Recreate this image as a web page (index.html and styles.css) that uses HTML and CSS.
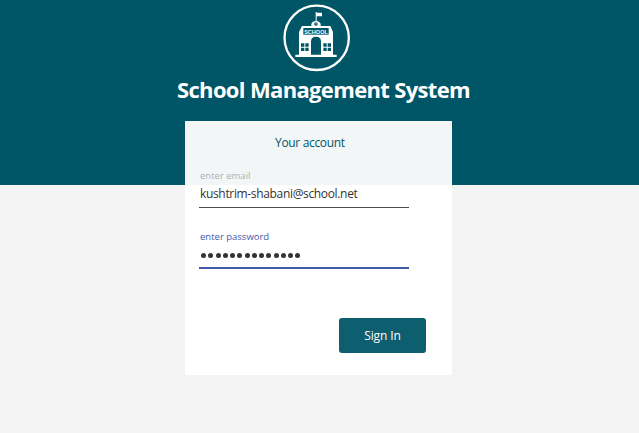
FILE: index.html
```html
<!DOCTYPE html>
<html lang="en">
<head>
<meta charset="utf-8">
<title>School Management System</title>
<link rel="stylesheet" href="styles.css">
</head>
<body>
<main class="page">
  <svg class="logo" viewBox="0 0 240 228" aria-hidden="true">
    <circle cx="122" cy="113.5" r="96.5" fill="none" stroke="#fff" stroke-width="7"/>
    <path fill="#fff" d="M119 36h3v2h16v11h-16v14h-3z"/>
    <path fill="#fff" d="M106 78v-6q3-9 14-9t14 9v6h29l8 18v68h11v7H58v-7h11V96l9-18z"/>
    <circle cx="120" cy="72" r="5.5" fill="#005667"/>
    <path d="M120 69v3h3" fill="none" stroke="#fff" stroke-width="1.5"/>
    <rect x="82" y="84" width="76" height="20" fill="#005667"/>
    <text class="sign" x="120" y="100.5" text-anchor="middle" textLength="71" lengthAdjust="spacingAndGlyphs">SCHOOL</text>
    <path fill="#005667" d="M105 164v-40q0-14 15-14t15 14v40z"/>
    <path fill="#005667" d="M75 130h10v10H75zM88 130h10v10H88zM75 143h10v10H75zM88 143h10v10H88zM142 130h10v10h-10zM155 130h10v10h-10zM142 143h10v10h-10zM155 143h10v10h-10z"/>
  </svg>
  <h1 class="title">School Management System</h1>
  <form class="card">
    <h2 class="heading">Your account</h2>
    <div class="field">
      <div class="label">enter email</div>
      <div class="value">kushtrim-shabani@school.net</div>
    </div>
    <div class="field active">
      <div class="label">enter password</div>
      <div class="dots"><i></i><i></i><i></i><i></i><i></i><i></i><i></i><i></i><i></i><i></i><i></i><i></i><i></i><i></i></div>
    </div>
    <button class="submit" type="button">Sign In</button>
  </form>
</main>
</body>
</html>
```
FILE: styles.css
```css
* { box-sizing: border-box; }
body {
  margin: 0;
  font-family: "Open Sans", "Noto Sans", sans-serif;
  background: #f3f3f3;
}
.page {
  height: 433px;
  overflow: hidden;
  background: linear-gradient(#005667 185px, #f3f3f3 185px);
}
.logo {
  display: block;
  width: 80px;
  height: 76px;
  margin-left: 276px;
}
.sign {
  fill: #fff;
  font: bold 18px "Liberation Sans", sans-serif;
}
.title {
  margin: 0 0 0 177px;
  height: 45px;
  font-size: 22px;
  font-weight: 700;
  line-height: 27px;
  letter-spacing: -0.66px;
  color: #fff;
  white-space: nowrap;
}
.card {
  width: 267px;
  height: 254px;
  margin-left: 185px;
  padding: 12px 26px 22px 14px;
  background: rgba(255, 255, 255, 0.95);
  display: flex;
  flex-direction: column;
}
.heading {
  margin: 0 0 0 76px;
  font-size: 12px;
  font-weight: 400;
  line-height: 20px;
  letter-spacing: -0.33px;
  color: #005667;
}
.field {
  width: 210px;
  height: 40px;
  margin-top: 15px;
  padding: 1px 0 0 1px;
  border-bottom: 1px solid #4d4d4d;
  white-space: nowrap;
}
.label {
  font-size: 9.5px;
  line-height: 14px;
  color: #adb1b1;
}
.value {
  margin-top: 2px;
  font-size: 12px;
  line-height: 18px;
  letter-spacing: -0.34px;
  color: #333;
}
.active {
  height: 41px;
  margin-top: 20px;
  border-bottom: 2px solid #4059a9;
}
.active .label { color: #4059a9; margin-top: 1px; }
.dots {
  display: flex;
  gap: 2.25px;
  padding: 9px 0 0 1px;
}
.dots i {
  width: 5px;
  height: 5px;
  border-radius: 50%;
  background: #333;
}
.submit {
  align-self: flex-end;
  width: 87px;
  height: 35px;
  margin-top: auto;
  padding: 0;
  border: 0;
  border-radius: 3px;
  background: #0d5e6e;
  color: #fff;
  font: 12px/35px "Open Sans", "Noto Sans", sans-serif;
  letter-spacing: -0.1px;
}
```
